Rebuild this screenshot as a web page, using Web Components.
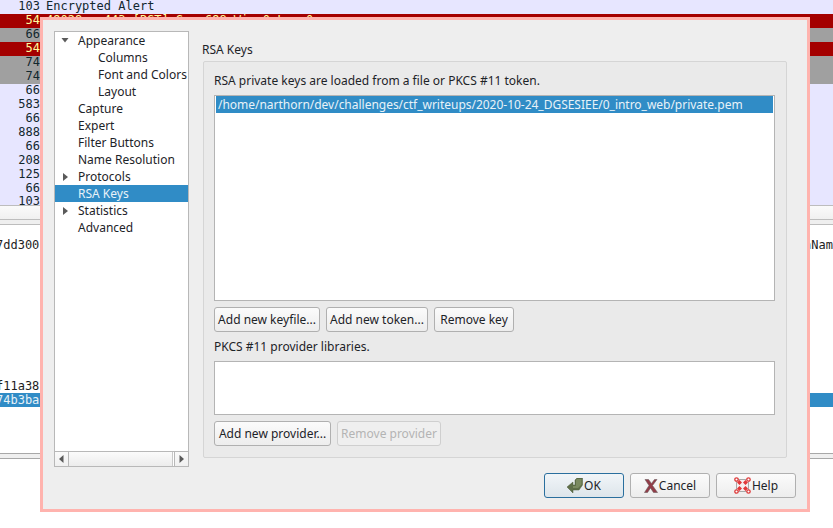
<!DOCTYPE html>
<html>
<head>
<meta charset="utf-8">
<style>
    html, body { margin: 0; height: 100%; overflow: hidden; background: #fff; }
    body { font: 12px "Noto Sans", sans-serif; color: #1d2328; }
</style>
</head>
<body>
<capture-window>
    <pref-dialog></pref-dialog>
</capture-window>

<template id="btn-tpl">
    <style>
        :host {
            display: inline-flex;
            align-items: center;
            justify-content: center;
            height: 25px;
            box-sizing: border-box;
            padding: 0 3px;
            gap: 1px;
            border: 1px solid #b0b0b0;
            border-radius: 3px;
            background: linear-gradient(#fbfbfb, #ededed);
            font: 12px "Noto Sans", sans-serif;
            color: #1d2328;
            white-space: nowrap;
        }
        :host([disabled]) { color: #b4b4b4; border-color: #cfcfcf; background: #efefef; }
        :host([default]) { border-color: #2a6f9e; background: linear-gradient(#f1f5f8, #dde5eb); }
    </style>
    <slot name="icon"></slot><slot></slot>
</template>

<script>
    class PacketRows extends HTMLElement {
        constructor() {
            super();
            this.attachShadow({ mode: 'open' });
        }

        connectedCallback() {
            const rows = [
                ['103', 'Encrypted Alert', ''],
                ['54', '49028 \u2192 443 [RST] Seq=698 Win=0 Len=0', 'red'],
                ['66', '', 'gray'],
                ['54', '', 'red'],
                ['74', '', 'gray'],
                ['74', '', 'gray'],
                ['66', '', ''],
                ['583', '', ''],
                ['66', '', ''],
                ['888', '', ''],
                ['66', '', ''],
                ['208', '', ''],
                ['125', '', ''],
                ['66', '', ''],
                ['103', '', '']
            ];
            this.shadowRoot.innerHTML = `
                <style>
                    :host {
                        display: block;
                        background: #e7e6ff;
                        font: 12px/12px "DejaVu Sans Mono", monospace;
                        color: #12272e;
                        height: 205px;
                        overflow: hidden;
                    }
                    .row { display: flex; height: 14px; white-space: pre; }
                    .row:first-child { margin-top: -2px; }
                    .row:last-child { height: 11px; line-height: 11px; }
                    .len { width: 40px; text-align: right; }
                    .info { margin-left: 6px; }
                    .red { background: #a40000; color: #fffc9c; }
                    .gray { background: #a0a0a0; color: #12272e; }
                </style>
                ${rows.map(r => `<div class="row ${r[2]}"><span class="len">${r[0]}</span><span class="info">${r[1]}</span></div>`).join('')}
            `;
        }
    }
    customElements.define('packet-rows', PacketRows);

    class HexPane extends HTMLElement {
        constructor() {
            super();
            this.attachShadow({ mode: 'open' });
        }

        connectedCallback() {
            this.shadowRoot.innerHTML = `
                <style>
                    :host {
                        display: block;
                        height: 228px;
                        box-sizing: border-box;
                        padding-top: 13px;
                        font: 12px/14px "DejaVu Sans Mono", monospace;
                        color: #1d1d1d;
                        background: #fff;
                    }
                    .line { display: flex; justify-content: space-between; height: 14px; white-space: pre; }
                    .gap { height: 127px; }
                    .line span:first-child { margin-left: -4px; }
                    .sel { background: #308cc6; color: #e8f2f8; }
                </style>
                <div class="line"><span>7dd300c</span><span>nNam</span></div>
                <div class="gap"></div>
                <div class="line"><span>f11a38</span></div>
                <div class="line sel"><span>74b3ba</span></div>
            `;
        }
    }
    customElements.define('hex-pane', HexPane);

    class CaptureWindow extends HTMLElement {
        constructor() {
            super();
            this.attachShadow({ mode: 'open' });
        }

        connectedCallback() {
            this.shadowRoot.innerHTML = `
                <style>
                    :host { display: block; position: relative; width: 833px; height: 528px; overflow: hidden; background: #fff; }
                    .split { height: 13px; background: linear-gradient(#fafafa, #f0f0f0); border-top: 1px solid #bdbdbd; border-bottom: 1px solid #bdbdbd; }
                    .head { height: 4px; background: #efefef; border-bottom: 1px solid #bdbdbd; }
                    .foot { height: 4px; background: #efefef; border-top: 1px solid #a8a8a8; border-bottom: 1px solid #a8a8a8; }
                </style>
                <packet-rows></packet-rows>
                <div class="split"></div>
                <div class="head"></div>
                <hex-pane></hex-pane>
                <div class="foot"></div>
                <slot></slot>
            `;
        }
    }
    customElements.define('capture-window', CaptureWindow);

    class PushBtn extends HTMLElement {
        constructor() {
            super();
            this.attachShadow({ mode: 'open' });
            this.shadowRoot.appendChild(document.getElementById('btn-tpl').content.cloneNode(true));
        }
    }
    customElements.define('push-btn', PushBtn);

    class PrefTree extends HTMLElement {
        constructor() {
            super();
            this.attachShadow({ mode: 'open' });
        }

        connectedCallback() {
            const items = [
                ['Appearance', 0, 'open'],
                ['Columns', 1],
                ['Font and Colors', 1],
                ['Layout', 1],
                ['Capture', 0],
                ['Expert', 0],
                ['Filter Buttons', 0],
                ['Name Resolution', 0],
                ['Protocols', 0, 'closed'],
                ['RSA Keys', 0, 'sel'],
                ['Statistics', 0, 'closed'],
                ['Advanced', 0]
            ];
            const arrow = s => s === 'open'
                ? '<svg class="arr open" width="8" height="5" viewBox="0 0 8 5"><path d="M.5 0H7.500L4 4.500z" fill="#5a5a5a"/></svg>'
                : s === 'closed'
                    ? '<svg class="arr" width="5" height="8" viewBox="0 0 5 8"><path d="M0 0V8L5 4z" fill="#5a5a5a"/></svg>'
                    : '';
            this.shadowRoot.innerHTML = `
                <style>
                    :host {
                        display: flex;
                        flex-direction: column;
                        width: 135px;
                        height: 436px;
                        box-sizing: border-box;
                        border: 1px solid #b8b8b8;
                        background: #fff;
                    }
                    .list { flex: 1; overflow: hidden; }
                    .item { position: relative; height: 17px; line-height: 17px; padding-left: 23px; white-space: nowrap; overflow: hidden; }
                    .item.sub { padding-left: 43px; }
                    .item.sel { background: #308cc6; color: #e8f2f8; }
                    .arr { position: absolute; left: 8px; top: 5px; }
                    .arr.open { left: 6px; top: 6px; }
                    .bar { display: flex; height: 14px; border-top: 1px solid #b8b8b8; background: #fff; }
                    .end { width: 13px; display: flex; align-items: center; justify-content: center; background: linear-gradient(#fafafa, #f0f0f0); }
                    .end:first-child { border-right: 1px solid #b8b8b8; }
                    .end:last-child { border-left: 1px solid #b8b8b8; }
                    .track { flex: 1; background: linear-gradient(#fbfbfb, #ececec); border-right: 1px solid #c8c8c8; margin-right: 1px; }
                </style>
                <div class="list">
                    ${items.map(i => `<div class="item ${i[1] ? 'sub' : ''} ${i[2] === 'sel' ? 'sel' : ''}">${arrow(i[2])}${i[0]}</div>`).join('')}
                </div>
                <div class="bar">
                    <div class="end"><svg width="5" height="8" viewBox="0 0 5 8"><path d="M4.500 0V8L0 4z" fill="#5a5a5a"/></svg></div>
                    <div class="track"></div>
                    <div class="end"><svg width="5" height="8" viewBox="0 0 5 8"><path d="M.5 0V8L5 4z" fill="#5a5a5a"/></svg></div>
                </div>
            `;
        }
    }
    customElements.define('pref-tree', PrefTree);

    class RsaPage extends HTMLElement {
        constructor() {
            super();
            this.attachShadow({ mode: 'open' });
        }

        connectedCallback() {
            this.shadowRoot.innerHTML = `
                <style>
                    :host { display: flex; flex-direction: column; flex: 1; min-width: 0; }
                    h2 { margin: 0 0 0 -1px; height: 30px; font: 12px/37px "Noto Sans", sans-serif; }
                    .box {
                        height: 397px;
                        box-sizing: border-box;
                        border: 1px solid #d5d5d5;
                        border-radius: 2px;
                        background: #eaeaea;
                        padding: 10px 11px 10px 10px;
                        display: flex;
                        flex-direction: column;
                    }
                    p { margin: 0; height: 17px; line-height: 17px; }
                    .list { border: 1px solid #b4b4b4; background: #fff; box-sizing: border-box; }
                    .keys { height: 206px; margin-top: 6px; padding: 0 1px; }
                    .libs { height: 54px; margin-top: 6px; }
                    .sel { height: 17px; line-height: 17px; background: #308cc6; color: #e8f2f8; padding-left: 2px; letter-spacing: -0.02px; white-space: nowrap; }
                    .btns { display: flex; gap: 6px; margin-top: 6px; }
                    .mid { margin-top: 6px; }
                </style>
                <h2>RSA Keys</h2>
                <div class="box">
                    <p>RSA private keys are loaded from a file or PKCS #11 token.</p>
                    <div class="list keys"><div class="sel">/home/narthorn/dev/challenges/ctf_writeups/2020-10-24_DGSESIEE/0_intro_web/private.pem</div></div>
                    <div class="btns">
                        <push-btn style="width:106px">Add new keyfile...</push-btn>
                        <push-btn style="width:102px">Add new token...</push-btn>
                        <push-btn style="width:80px">Remove key</push-btn>
                    </div>
                    <p class="mid">PKCS #11 provider libraries.</p>
                    <div class="list libs"></div>
                    <div class="btns">
                        <push-btn style="width:117px">Add new provider...</push-btn>
                        <push-btn style="width:104px" disabled>Remove provider</push-btn>
                    </div>
                </div>
            `;
        }
    }
    customElements.define('rsa-page', RsaPage);

    class PrefDialog extends HTMLElement {
        constructor() {
            super();
            this.attachShadow({ mode: 'open' });
        }

        connectedCallback() {
            this.shadowRoot.innerHTML = `
                <style>
                    :host {
                        position: absolute;
                        left: 40px;
                        top: 17px;
                        width: 770px;
                        height: 495px;
                        box-sizing: border-box;
                        border: 3px solid #ffb3ae;
                        background: #eeeeee;
                        padding: 11px 20px 0 11px;
                        display: flex;
                        flex-direction: column;
                    }
                    .main { display: flex; gap: 14px; height: 436px; }
                    .foot { display: flex; justify-content: flex-end; gap: 6px; margin-top: 6px; margin-right: -9px; }
                    svg { display: block; }
                </style>
                <div class="main">
                    <pref-tree></pref-tree>
                    <rsa-page></rsa-page>
                </div>
                <div class="foot">
                    <push-btn default style="width:80px">
                        <svg slot="icon" width="16" height="16" viewBox="0 0 16 16"><path d="M0 9 6 4V7H8V2L10 0H15.500V7L12 12H6V15z" fill="#5f6f49" stroke="#4f5c3a" stroke-width=".5"/><path d="M10 1H14.500V6.500L11 10H6V8H9V2z" fill="#7a8a60"/></svg>OK
                    </push-btn>
                    <push-btn style="width:80px">
                        <svg slot="icon" width="14" height="14" viewBox="0 0 14 14"><path d="M1 .5H4.500L7.500 4.500 10.500.5H13L8.500 6.500 13.500 13.500H9.500L6.500 9 3.500 13.500H.5L5 6.500z" fill="#933c48" stroke="#6d5c5e" stroke-width=".6"/></svg>Cancel
                    </push-btn>
                    <push-btn style="width:80px">
                        <svg slot="icon" width="17" height="17" viewBox="0 0 17 17"><rect x="2.500" y="2.500" width="12" height="12" fill="#f6eeee" stroke="#a8a8a8"/><g fill="#fff" stroke="#de3b3b" stroke-width="1.300"><circle cx="2.500" cy="2.500" r="1.700"/><circle cx="14.500" cy="2.500" r="1.700"/><circle cx="2.500" cy="14.500" r="1.700"/><circle cx="14.500" cy="14.500" r="1.700"/></g><path d="M5.500 3 8 5.500 5.500 8 3 5.500zM11.500 3 14 5.500 11.500 8 9 5.500zM5.500 9 8 11.500 5.500 14 3 11.500zM11.500 9 14 11.500 11.500 14 9 11.500z" fill="#e2383a"/></svg>Help
                    </push-btn>
                </div>
            `;
        }
    }
    customElements.define('pref-dialog', PrefDialog);
</script>
</body>
</html>
